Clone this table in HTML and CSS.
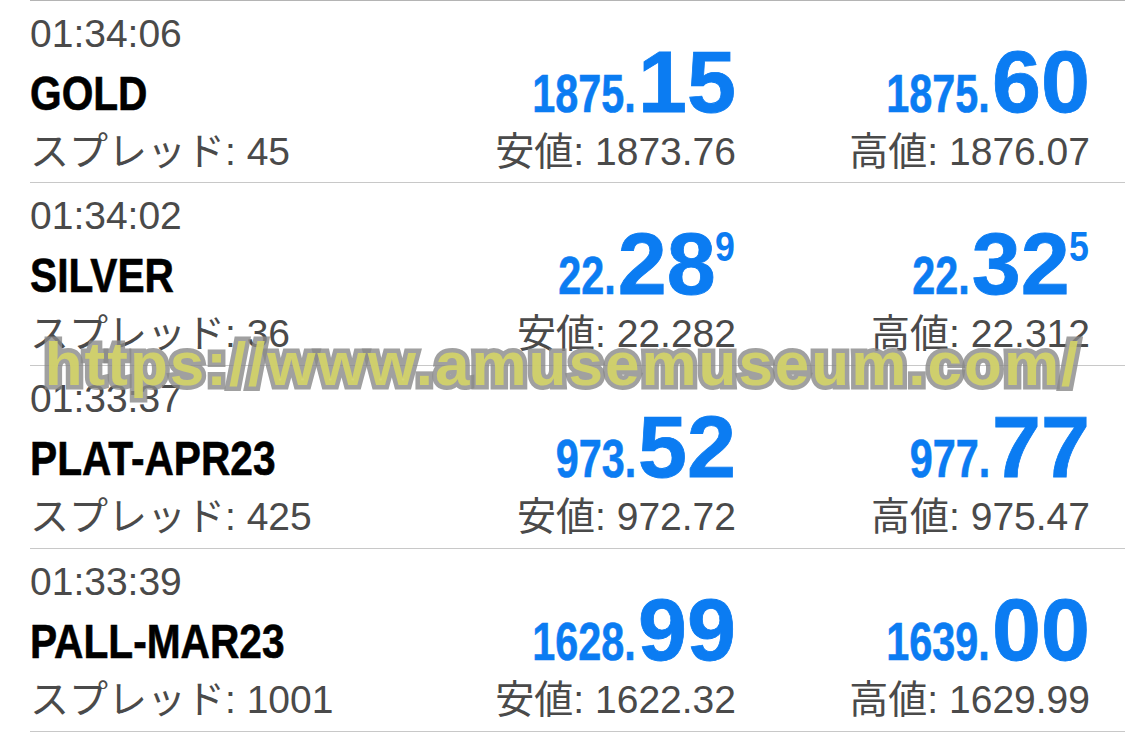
FILE: index.html
```html
<!DOCTYPE html>
<html lang="ja">
<head>
<meta charset="utf-8">
<title>Quotes</title>
<link rel="stylesheet" href="styles.css">
</head>
<body>
<div class="list">
  <div class="row">
    <div class="info">
      <div class="time">01:34:06</div>
      <div class="sym"><span class="sym-text">GOLD</span></div>
      <div class="spread">スプレッド: 45</div>
    </div>
    <div class="quote">
      <div class="price"><span class="ps">1875.</span><span class="pb">15</span></div>
      <div class="range">安値: 1873.76</div>
    </div>
    <div class="quote">
      <div class="price"><span class="ps">1875.</span><span class="pb">60</span></div>
      <div class="range">高値: 1876.07</div>
    </div>
  </div>
  <div class="row">
    <div class="info">
      <div class="time">01:34:02</div>
      <div class="sym"><span class="sym-text">SILVER</span></div>
      <div class="spread">スプレッド: 36</div>
    </div>
    <div class="quote">
      <div class="price"><span class="ps">22.</span><span class="pb">28</span><span class="px">9</span></div>
      <div class="range">安値: 22.282</div>
    </div>
    <div class="quote">
      <div class="price"><span class="ps">22.</span><span class="pb">32</span><span class="px">5</span></div>
      <div class="range">高値: 22.312</div>
    </div>
  </div>
  <div class="row">
    <div class="info">
      <div class="time">01:33:37</div>
      <div class="sym"><span class="sym-text">PLAT-APR23</span></div>
      <div class="spread">スプレッド: 425</div>
    </div>
    <div class="quote">
      <div class="price"><span class="ps">973.</span><span class="pb">52</span></div>
      <div class="range">安値: 972.72</div>
    </div>
    <div class="quote">
      <div class="price"><span class="ps">977.</span><span class="pb">77</span></div>
      <div class="range">高値: 975.47</div>
    </div>
  </div>
  <div class="row">
    <div class="info">
      <div class="time">01:33:39</div>
      <div class="sym"><span class="sym-text">PALL-MAR23</span></div>
      <div class="spread">スプレッド: 1001</div>
    </div>
    <div class="quote">
      <div class="price"><span class="ps">1628.</span><span class="pb">99</span></div>
      <div class="range">安値: 1622.32</div>
    </div>
    <div class="quote">
      <div class="price"><span class="ps">1639.</span><span class="pb">00</span></div>
      <div class="range">高値: 1629.99</div>
    </div>
  </div>
</div>
<div class="watermark">https://www.amusemuseum.com/</div>
</body>
</html>
```
FILE: styles.css
```css
html, body {
  margin: 0;
  padding: 0;
  background: #ffffff;
}
body {
  width: 1125px;
  height: 738px;
  overflow: hidden;
  position: relative;
  font-family: "Liberation Sans", "Noto Sans CJK JP", sans-serif;
  color: #4a4a4a;
}
.list {
  margin-left: 30px;
  border-top: 1px solid #b4b4b4;
}
.row {
  box-sizing: border-box;
  height: 183px;
  border-bottom: 1px solid #c8c8c8;
  display: grid;
  grid-template-columns: 1fr 354px 354px;
  padding-right: 35px;
}
.row:first-child {
  height: 182px;
}
.info {
  display: flex;
  flex-direction: column;
  align-items: flex-start;
  padding-top: 14px;
}
.time, .spread, .range {
  font-size: 39px;
  line-height: 38px;
  white-space: nowrap;
}
.sym {
  font-weight: 700;
  font-size: 49px;
  line-height: 48px;
  color: #000;
  margin-top: 16px;
  margin-bottom: 16px;
  white-space: nowrap;
}
.sym-text {
  display: inline-block;
  transform: scaleX(0.83);
  transform-origin: left center;
  -webkit-text-stroke: 0.6px #000;
}
.quote {
  display: flex;
  flex-direction: column;
  align-items: flex-end;
  padding-top: 37px;
}
.price {
  display: flex;
  align-items: baseline;
  color: #0b7cf2;
  font-weight: 700;
}
.ps {
  display: inline-block;
  font-size: 53px;
  line-height: 1;
  transform: scaleX(0.78);
  transform-origin: right center;
  -webkit-text-stroke: 0.6px #0b7cf2;
}
.pb {
  font-size: 88px;
  line-height: 1;
  margin-left: 2px;
  -webkit-text-stroke: 0.8px #0b7cf2;
}
.px {
  display: inline-block;
  align-self: flex-start;
  font-size: 42px;
  line-height: 1;
  margin-top: 6px;
  margin-left: -1px;
  margin-right: -2px;
  transform: scaleX(0.85);
  transform-origin: left center;
}
.range {
  margin-top: 7px;
}
.watermark {
  position: absolute;
  left: 0;
  right: 0;
  top: 329px;
  text-align: center;
  font-family: "Liberation Sans", sans-serif;
  font-weight: 700;
  font-size: 62px;
  line-height: 70px;
  letter-spacing: 2px;
  color: rgba(210, 210, 104, 0.92);
  -webkit-text-stroke: 9px rgba(136, 136, 136, 0.8);
  paint-order: stroke fill;
  white-space: nowrap;
}
```
